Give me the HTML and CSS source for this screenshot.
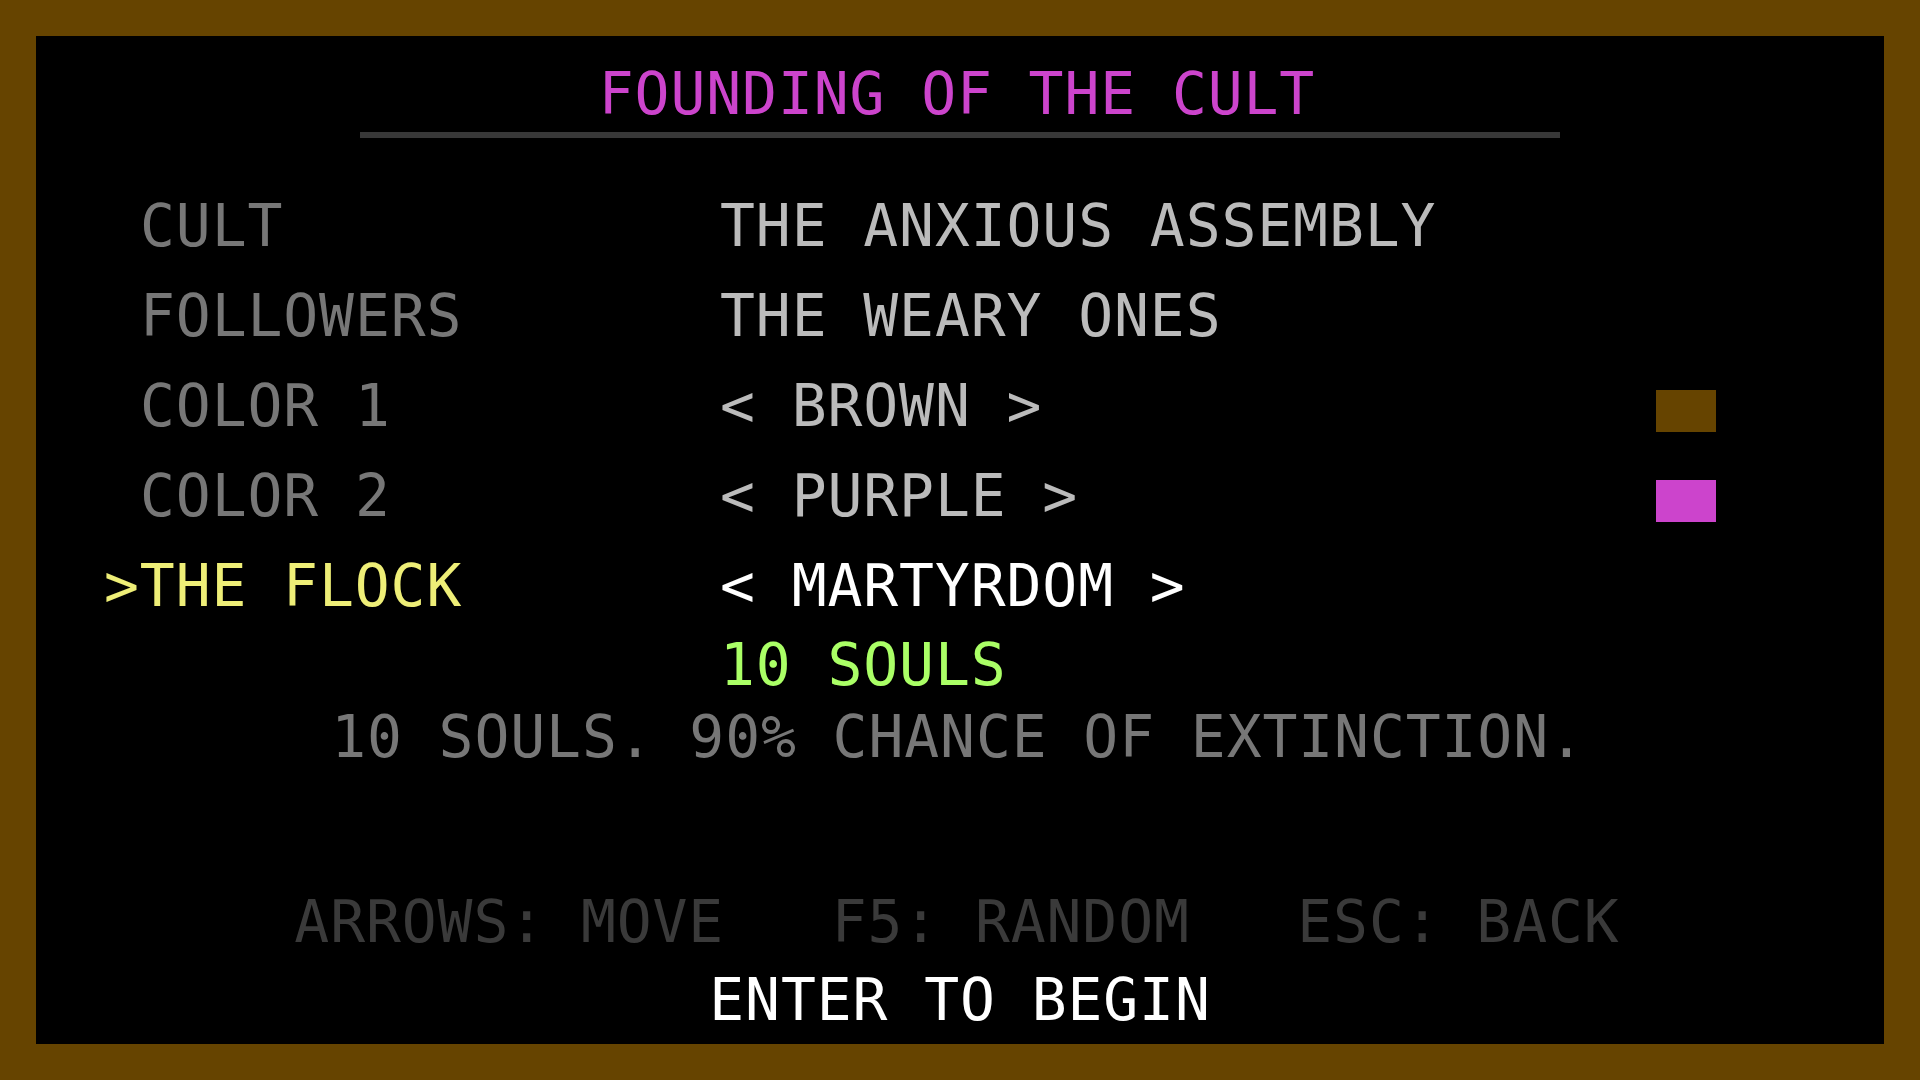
FILE: index.html
```html
<!DOCTYPE html>
<html>
<head>
<meta charset="utf-8">
<title>Founding of the Cult</title>
<link rel="stylesheet" href="styles.css">
</head>
<body>
<div class="frame">
  <div class="screen">
    <div class="title">FOUNDING OF THE CULT</div>
    <div class="rule"></div>
    <div class="rows">
      <div class="row">
        <div class="label">CULT</div>
        <div class="value">THE ANXIOUS ASSEMBLY</div>
        <div class="swatch-cell"></div>
      </div>
      <div class="row">
        <div class="label">FOLLOWERS</div>
        <div class="value">THE WEARY ONES</div>
        <div class="swatch-cell"></div>
      </div>
      <div class="row">
        <div class="label">COLOR 1</div>
        <div class="value">&lt; BROWN &gt;</div>
        <div class="swatch-cell"><div class="swatch swatch-brown"></div></div>
      </div>
      <div class="row">
        <div class="label">COLOR 2</div>
        <div class="value">&lt; PURPLE &gt;</div>
        <div class="swatch-cell"><div class="swatch swatch-purple"></div></div>
      </div>
      <div class="row selected">
        <div class="label"><span class="cursor">&gt;</span>THE FLOCK</div>
        <div class="value">&lt; MARTYRDOM &gt;</div>
        <div class="swatch-cell"></div>
      </div>
    </div>
    <div class="souls">10 SOULS</div>
    <div class="desc">10 SOULS. 90% CHANCE OF EXTINCTION.</div>
    <div class="footer">
      <div class="controls">ARROWS: MOVE   F5: RANDOM   ESC: BACK</div>
      <div class="enter">ENTER TO BEGIN</div>
    </div>
  </div>
</div>
</body>
</html>
```

FILE: styles.css
```css
* {
  box-sizing: border-box;
}

html, body {
  margin: 0;
  padding: 0;
  width: 1920px;
  height: 1080px;
  overflow: hidden;
  background: #664400;
}

.frame {
  width: 1920px;
  height: 1080px;
  padding: 36px;
}

.screen {
  width: 1848px;
  height: 1008px;
  background: #000000;
  display: flex;
  flex-direction: column;
  font-family: "DejaVu Sans Mono", "Liberation Mono", monospace;
  font-size: 58px;
  letter-spacing: 0.9px;
  line-height: 60px;
}

.screen > * {
  flex-shrink: 0;
}

.title,
.label,
.value,
.souls,
.desc,
.controls,
.enter {
  white-space: pre;
}

.title {
  padding-top: 28px;
  padding-right: 6px;
  height: 88px;
  text-align: center;
  color: #cc44cc;
}

.rule {
  width: 1200px;
  height: 6px;
  margin: 8px auto 0;
  background: #383838;
}

.rows {
  margin-top: 43px;
  padding-left: 104px;
  padding-right: 168px;
}

.row {
  display: grid;
  grid-template-columns: 580px 1fr 60px;
  height: 90px;
  line-height: 90px;
}

.label {
  color: #777777;
}

.value {
  color: #bbbbbb;
}

.swatch-cell {
  display: flex;
  align-items: flex-start;
}

.swatch {
  width: 60px;
  height: 42px;
  margin-top: 29px;
}

.swatch-brown {
  background: #664400;
}

.swatch-purple {
  background: #cc44cc;
}

.selected .label {
  color: #eeee77;
}

.selected .value {
  color: #ffffff;
}

.cursor {
  margin-left: -36px;
}

.souls {
  margin-top: 4px;
  padding-left: 684px;
  color: #aaff66;
}

.desc {
  margin-top: 12px;
  padding-right: 4px;
  text-align: center;
  color: #777777;
}

.footer {
  margin-top: auto;
  padding-bottom: 14px;
  display: flex;
  flex-direction: column;
  align-items: center;
}

.controls {
  margin-right: 6px;
  color: #3a3a3a;
}

.enter {
  margin-top: 18px;
  color: #ffffff;
}
```
